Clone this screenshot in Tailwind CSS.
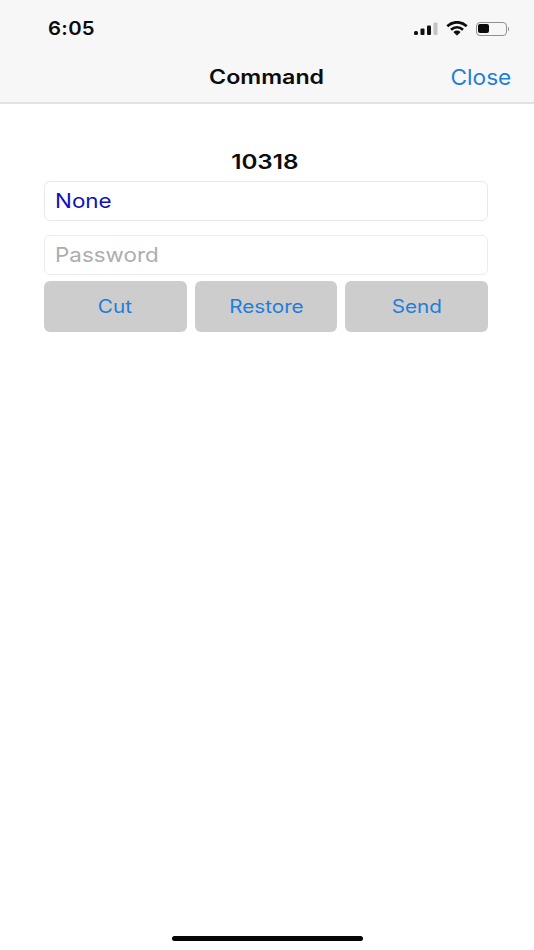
<!DOCTYPE html>
<html>
<head>
<meta charset="utf-8">
<script src="https://cdn.jsdelivr.net/npm/@tailwindcss/browser@4"></script>
</head>
<body class="bg-white">
<div class="w-[534px] h-[950px] flex flex-col bg-white font-['Inter','Liberation_Sans',sans-serif] overflow-hidden">
  <header class="h-[104px] shrink-0 bg-[#f7f7f7] border-b-2 border-[#e2e2e2] flex flex-col">
    <div class="h-[56px] pl-[48px] pr-[25px] pt-[17.5px] flex items-start justify-between">
      <span class="inline-block origin-left scale-x-[1.07] text-[19px] leading-[22px] font-semibold text-[#0c0c0c] tracking-[0.3px]">6:05</span>
      <div class="flex items-center gap-[8px] pt-[3.5px]">
        <svg width="24" height="14" viewBox="0 0 24 14"><rect x="0" y="9" width="4" height="4" rx="1.5" fill="#111"/><rect x="6.5" y="6.5" width="4" height="6.5" rx="1" fill="#111"/><rect x="13" y="3.5" width="4" height="9.5" rx="1" fill="#111"/><rect x="19.5" y="0.5" width="4" height="12.5" rx="1" fill="#c4c4c4"/></svg>
        <svg width="22" height="15" viewBox="0 0 22 15" fill="none" stroke="#0c0c0c" stroke-width="2.8"><path d="M1.3 5.2C7 0 15 0 20.7 5.2"/><path d="M5 8.8C8.6 5.6 13.4 5.6 17 8.8"/><path d="M8.3 12C9.9 10.8 12.1 10.8 13.7 12"/><circle cx="11" cy="13.2" r="0.8" fill="#0c0c0c" stroke-width="1"/></svg>
        <div class="flex items-center gap-[1px]">
          <div class="w-[31px] h-[14px] rounded-[4px] border border-[#8f8f8f] p-[1.5px] flex">
            <div class="w-[10.5px] bg-[#0a0a0a] rounded-[2px]"></div>
          </div>
          <div class="w-[1.5px] h-[4px] bg-[#8f8f8f] rounded-r-sm"></div>
        </div>
      </div>
    </div>
    <div class="relative h-[40px] flex items-center justify-center">
      <span class="inline-block scale-x-[1.16] text-[20px] leading-[24px] font-semibold text-[#0c0c0c] mt-[2px]">Command</span>
      <span class="absolute right-[23px] top-[9px] inline-block origin-right scale-x-[1.08] text-[21px] leading-[26px] text-[#1f7ddb]">Close</span>
    </div>
  </header>
  <main class="flex-1 relative pl-[44px] pr-[46px] pt-[46px] flex flex-col">
    <div class="h-[31px] flex items-start justify-center pr-[2px] text-[20px] leading-[24px] font-semibold text-[#0c0c0c]"><span class="inline-block scale-x-[1.21]">10318</span></div>
    <div class="h-[39.5px] rounded-[6px] border border-[#e8e8e8] px-[10px] flex items-center text-[20px] text-[#1010bf]"><span class="inline-block origin-left scale-x-[1.12]">None</span></div>
    <div class="h-[39.5px] mt-[14.5px] rounded-[6px] border border-[#ececec] px-[10px] flex items-center text-[20px] text-[#adadad]"><span class="inline-block origin-left scale-x-[1.12]">Password</span></div>
    <div class="mt-[6.5px] grid grid-cols-3 gap-[8px] h-[51px] text-[18px] text-[#1f7ddb]">
      <div class="bg-[#cdcdcd] rounded-[6px] flex items-center justify-center"><span class="inline-block scale-x-[1.15]">Cut</span></div>
      <div class="bg-[#cdcdcd] rounded-[6px] flex items-center justify-center"><span class="inline-block scale-x-[1.15]">Restore</span></div>
      <div class="bg-[#cdcdcd] rounded-[6px] flex items-center justify-center"><span class="inline-block scale-x-[1.15]">Send</span></div>
    </div>
    <div class="absolute left-[172px] top-[832px] w-[191px] h-[5px] rounded-full bg-[#050505]"></div>
  </main>
</div>
</body>
</html>
